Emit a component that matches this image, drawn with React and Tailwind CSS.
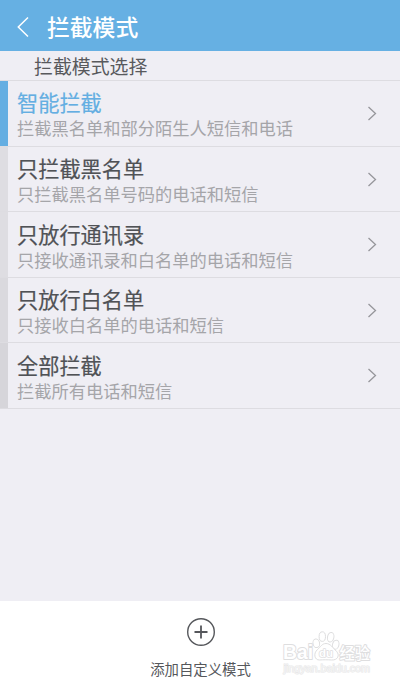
import React, { useState } from 'react';

const modes = [
  { id: 'smart', title: '智能拦截', desc: '拦截黑名单和部分陌生人短信和电话', bar: 'bg-[#dedde2]' },
  { id: 'blacklist', title: '只拦截黑名单', desc: '只拦截黑名单号码的电话和短信', bar: 'bg-[#dedde2]' },
  { id: 'contacts', title: '只放行通讯录', desc: '只接收通讯录和白名单的电话和短信', bar: 'bg-[#dedde2]' },
  { id: 'whitelist', title: '只放行白名单', desc: '只接收白名单的电话和短信', bar: 'bg-[#dad9de]' },
  { id: 'all', title: '全部拦截', desc: '拦截所有电话和短信', bar: 'bg-[#d6d5da]' },
];

const ModeRow = ({ mode, active, onSelect }) => (
  <button onClick={onSelect} className="flex w-full h-[65.6px] text-left border-b border-[#dddce1]">
    <span className={`w-2 h-full shrink-0 ${active ? 'bg-[#64aee2]' : mode.bar}`} />
    <span className="flex-1 pl-[9px] pt-[8.4px] flex flex-col whitespace-nowrap">
      <span className={`text-[21.2px] leading-[26px] [-webkit-text-stroke:0.2px_currentColor] ${active ? 'text-[#64aee2]' : 'text-[#505256]'}`}>
        {mode.title}
      </span>
      <span className="text-[17.25px] leading-[26.4px] text-[#a5a5a9]">{mode.desc}</span>
    </span>
    <svg className="w-[10px] h-4 mt-6 mr-[23px] shrink-0" viewBox="0 0 10 16" fill="none" stroke="#96969b" strokeWidth="1.3">
      <path d="M1.5 2 L8.5 8.5 L1.5 15" />
    </svg>
  </button>
);

const Watermark = () => (
  <svg
    className="absolute left-[280px] top-[28px] w-[96px] h-[48px]"
    viewBox="0 0 96 48"
    fill="#ffffff"
    stroke="#dededf"
    strokeWidth="1"
    fontFamily="'Liberation Sans', 'Noto Sans CJK SC', sans-serif"
  >
    <ellipse cx="36.3" cy="14.3" rx="3.3" ry="4.3" transform="rotate(-12 36.3 14.3)" />
    <ellipse cx="42.3" cy="7.6" rx="3.2" ry="4.8" />
    <ellipse cx="50.7" cy="8.2" rx="3.2" ry="4.8" transform="rotate(12 50.7 8.2)" />
    <ellipse cx="55.7" cy="15.7" rx="3.2" ry="4.6" transform="rotate(15 55.7 15.7)" />
    <path d="M46 14.5 C42 14.5 40.5 18 37.5 20.5 C33 24.5 34.5 31.2 39.5 31 C43 30.7 48 30.7 51.5 31 C58 31.4 60 26 56.5 22.3 C53 19 50.5 14.5 46 14.5 Z" />
    <g strokeWidth="2" paintOrder="stroke" strokeLinejoin="round">
      <text x="3" y="30" fontSize="20.5" fontWeight="700" textLength="30" lengthAdjust="spacingAndGlyphs">Bai</text>
      <text x="39" y="28" fontSize="11.5" fontWeight="700" strokeWidth="1.5" textLength="14" lengthAdjust="spacingAndGlyphs">du</text>
      <text x="59.5" y="29.5" fontSize="15.5" fontWeight="500" textLength="30.5" lengthAdjust="spacingAndGlyphs">经验</text>
    </g>
    <text x="3.5" y="42.5" fontSize="10" fill="#f5f5f5" stroke="#e7e7e8" strokeWidth="1" paintOrder="stroke" textLength="86.5" lengthAdjust="spacingAndGlyphs">
      jingyan.baidu.com
    </text>
  </svg>
);

const App = () => {
  const [selected, setSelected] = useState('smart');

  return (
    <div className="w-[400px] h-[685px] flex flex-col overflow-hidden bg-[#efeef4] font-['Noto_Sans_CJK_SC','Liberation_Sans',sans-serif]">
      <header className="h-[51px] shrink-0 flex items-center bg-[#66b0e3] text-white">
        <svg className="w-3 h-[22px] ml-[17px] mt-[2px]" viewBox="0 0 12 22" fill="none" stroke="currentColor" strokeWidth="1.5">
          <path d="M11 1.5 L1.3 11 L11 20.5" />
        </svg>
        <h1 className="ml-[18px] mt-[3px] text-[22.8px] leading-[30px] font-medium">拦截模式</h1>
      </header>

      <div className="h-[30px] shrink-0 pl-[34px] border-b border-[#dddce1]">
        <h2 className="text-[18.9px] leading-[29px] text-[#58595d]">拦截模式选择</h2>
      </div>

      <main className="flex-1">
        {modes.map((mode) => (
          <ModeRow key={mode.id} mode={mode} active={mode.id === selected} onSelect={() => setSelected(mode.id)} />
        ))}
      </main>

      <footer className="relative h-[84px] shrink-0 bg-white">
        <button className="w-full flex flex-col items-center pt-[17px] pl-px text-[#55575b]">
          <svg className="w-[30px] h-[30px]" viewBox="0 0 30 30" fill="none" stroke="currentColor">
            <circle cx="15" cy="14" r="13.3" strokeWidth="1.4" />
            <path d="M15 7.5 V20.5 M8.5 14 H21.5" strokeWidth="1.8" />
          </svg>
          <span className="mt-[10px] text-[14.4px] leading-[22px]">添加自定义模式</span>
        </button>
        <Watermark />
      </footer>
    </div>
  );
};

export default App;
